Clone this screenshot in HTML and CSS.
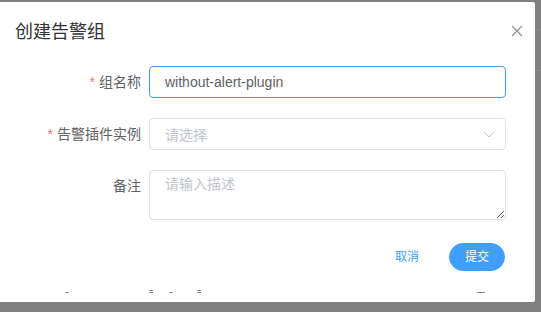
FILE: index.html
```html
<!DOCTYPE html>
<html>

<head>
    <title>创建告警组</title>
    <link rel="stylesheet" href="styles.css">
</head>

<body>
    <div class="page">
        <div class="dialog">
            <div class="dialog-header">
                <span class="dialog-title">创建告警组</span>
                <button class="dialog-close" type="button">
                    <svg width="12" height="12" viewBox="0 0 12 12">
                        <path d="M1 1L11 11M11 1L1 11" stroke="#909399" stroke-width="1.2" fill="none" />
                    </svg>
                </button>
            </div>

            <form class="dialog-body">
                <div class="form-item">
                    <label class="form-label required" for="groupName">组名称</label>
                    <div class="form-control">
                        <input class="input is-focus" type="text" id="groupName" value="without-alert-plugin">
                    </div>
                </div>

                <div class="form-item">
                    <label class="form-label required">告警插件实例</label>
                    <div class="form-control">
                        <div class="select">
                            <span class="placeholder">请选择</span>
                            <svg width="12" height="7" viewBox="0 0 12 7">
                                <path d="M0.5 0.5L6 6L11.5 0.5" stroke="#c0c4cc" stroke-width="1" fill="none" />
                            </svg>
                        </div>
                    </div>
                </div>

                <div class="form-item">
                    <label class="form-label" for="description">备注</label>
                    <div class="form-control">
                        <textarea class="textarea" id="description" placeholder="请输入描述"></textarea>
                    </div>
                </div>
            </form>

            <div class="dialog-footer">
                <button class="btn btn-text" type="button">取消</button>
                <button class="btn btn-primary" type="button">提交</button>
            </div>

            
            <div class="ghost-row">
                <span class="dash"></span>
                <span class="dash double"></span>
                <span class="dash"></span>
                <span class="dash double"></span>
                <span class="dash wide"></span>
            </div>
        </div>

        <div class="mask-edge">
            <i></i>
            <i></i>
        </div>
    </div>
</body>
</html>
```

FILE: styles.css
```css
body {
    margin: 0;
    background-color: #808080;
    font-family: "Liberation Sans", "Noto Sans CJK SC", sans-serif;
}

.page {
    display: flex;
    align-items: flex-start;
}

.dialog {
    width: 535px;
    height: 300px;
    margin-top: 2px;
    background-color: #ffffff;
    border-radius: 0 2px 2px 0;
    box-sizing: border-box;
}

.dialog-header {
    display: flex;
    justify-content: space-between;
    align-items: center;
    padding: 18px 12px 0 15px;
}

.dialog-title {
    font-size: 18px;
    line-height: 24px;
    color: #303133;
}

.dialog-close {
    display: flex;
    padding: 0;
    margin-top: -2px;
    border: none;
    background: none;
}

.dialog-body {
    margin: 0;
    padding-top: 22px;
}

.form-item {
    display: flex;
    margin-bottom: 20px;
}

.form-item:last-child {
    margin-bottom: 0;
}

.form-label {
    width: 141px;
    padding-right: 8px;
    text-align: right;
    font-size: 14px;
    line-height: 32px;
    color: #606266;
}

.form-label.required::before {
    content: "*";
    color: #f56c6c;
    margin-right: 4px;
}

.form-control {
    width: 357px;
}

.input,
.select,
.textarea {
    display: block;
    width: 100%;
    box-sizing: border-box;
    border: 1px solid #dcdfe6;
    border-radius: 4px;
    background-color: #ffffff;
    font-family: "Liberation Sans", "Noto Sans CJK SC", sans-serif;
    font-size: 14px;
    color: #606266;
    outline: none;
}

.input {
    height: 32px;
    padding: 0 15px;
}

.input.is-focus {
    border-color: #409eff;
}

.select {
    height: 32px;
    display: flex;
    justify-content: space-between;
    align-items: center;
    padding: 0 10px 0 15px;
}

.placeholder {
    color: #c0c4cc;
}

.textarea {
    height: 50px;
    padding: 3px 15px;
    line-height: 1.5;
    resize: vertical;
}

.textarea::placeholder {
    color: #c0c4cc;
}

.dialog-footer {
    display: flex;
    justify-content: flex-end;
    gap: 14px;
    padding: 23px 30px 0 0;
}

.btn {
    font-family: "Liberation Sans", "Noto Sans CJK SC", sans-serif;
    font-size: 12px;
    line-height: 12px;
    padding: 7px 15px;
    border: 1px solid transparent;
    background: none;
}

.btn-text {
    color: #409eff;
}

.btn-primary {
    color: #ffffff;
    background-color: #409eff;
    border-color: #409eff;
    border-radius: 20px;
}

.ghost-row {
    display: flex;
    align-items: flex-end;
    margin-top: 19px;
}

.dash {
    width: 4px;
    height: 1px;
    background-color: #8c8c8c;
}

.dash:nth-child(1) {
    margin-left: 65px;
}

.dash:nth-child(2) {
    margin-left: 80px;
}

.dash:nth-child(3) {
    margin-left: 16px;
}

.dash:nth-child(4) {
    margin-left: 24px;
}

.dash.double {
    height: 1px;
    background-color: transparent;
    border-top: 1px solid #8c8c8c;
    border-bottom: 1px solid #8c8c8c;
}

.dash.wide {
    width: 8px;
    margin-left: 276px;
}

.mask-edge {
    flex: 1;
    display: flex;
    flex-direction: column;
    padding-top: 29px;
    gap: 40px;
}

.mask-edge i {
    display: block;
    height: 1px;
    background-color: #8a8a8a;
}
```
